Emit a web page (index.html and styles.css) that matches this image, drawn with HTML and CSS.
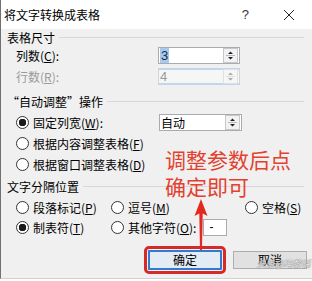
FILE: index.html
```html
<!DOCTYPE html>
<html lang="zh-CN">
<head>
    <meta charset="UTF-8">
    <title>将文字转换成表格</title>
    <link rel="stylesheet" href="styles.css">
</head>
<body>
    <div class="dialog">
        <div class="titlebar">
            <span class="title">将文字转换成表格</span>
            <span class="help">?</span>
            <svg class="close" width="12" height="12" viewBox="0 0 12 12">
                <path d="M1 1L11 11M11 1L1 11" stroke="#222" stroke-width="1"/>
            </svg>
        </div>

        <div class="group-title"><span>表格尺寸</span></div>
        <div class="field-row">
            <label>列数(<u>C</u>):</label>
            <div class="spin">
                <span class="value"><span class="sel">3</span></span>
                <span class="spin-btn">
                    <svg width="13" height="13" viewBox="0 0 13 13"><path d="M4 5L6.5 2.5L9 5Z M4 8L6.5 10.5L9 8Z" fill="#222"/><path d="M2 6.5H11" stroke="#bbb"/></svg>
                </span>
            </div>
        </div>
        <div class="field-row disabled">
            <label>行数(<u>R</u>):</label>
            <div class="spin">
                <span class="value">4</span>
                <span class="spin-btn">
                    <svg width="13" height="13" viewBox="0 0 13 13"><path d="M4 5L6.5 2.5L9 5Z M4 8L6.5 10.5L9 8Z" fill="#aaa"/><path d="M2 6.5H11" stroke="#ddd"/></svg>
                </span>
            </div>
        </div>

        <div class="group-title second"><span>“自动调整”操作</span></div>
        <div class="radio-row">
            <span class="radio checked">固定列宽(<u>W</u>):</span>
            <div class="spin">
                <span class="value">自动</span>
                <span class="spin-btn">
                    <svg width="13" height="13" viewBox="0 0 13 13"><path d="M4 5L6.5 2.5L9 5Z M4 8L6.5 10.5L9 8Z" fill="#222"/><path d="M2 6.5H11" stroke="#bbb"/></svg>
                </span>
            </div>
        </div>
        <div class="radio-row"><span class="radio">根据内容调整表格(<u>F</u>)</span></div>
        <div class="radio-row"><span class="radio">根据窗口调整表格(<u>D</u>)</span></div>

        <div class="group-title third"><span>文字分隔位置</span></div>
        <div class="sep-row first">
            <span class="radio">段落标记(<u>P</u>)</span>
            <span class="radio">逗号(<u>M</u>)</span>
            <span class="radio">空格(<u>S</u>)</span>
        </div>
        <div class="sep-row">
            <span class="radio checked">制表符(<u>T</u>)</span>
            <span class="radio other">其他字符(<u>O</u>):<span class="char-box">-</span></span>
        </div>

        <div class="buttons">
            <button class="btn ok">确定</button>
            <button class="btn">取消</button>
        </div>

        <div class="note">调整参数后点<br>确定即可</div>
        <svg class="arrow" width="20" height="54" viewBox="0 0 20 54">
            <path d="M10 1L3.5 18L8.3 15.5L9 52H11L11.7 15.5L16.5 18Z" fill="#e3281f"/>
        </svg>
        <span class="watermark">头条@冯黎话</span>
    </div>
</body>
</html>
```

FILE: styles.css
```css
body {
    margin: 0;
    background: #fff;
    font-family: "Noto Sans CJK SC", "Noto Sans", sans-serif;
    font-size: 12px;
    color: #000;
}
.dialog {
    position: relative;
    width: 312px;
    height: 279px;
    box-sizing: border-box;
    background: #f0f0f0;
    border-left: 1px solid #707070;
    border-bottom: 1px solid #d0d0d0;
}
.titlebar {
    height: 29px;
    background: #fff;
    display: flex;
    align-items: center;
    padding-left: 3px;
}
.title {
    font-size: 12px;
    flex: 1;
}
.help {
    font-family: "Liberation Sans", sans-serif;
    font-size: 13px;
    color: #333;
    margin-right: 34px;
}
.close {
    margin-right: 17px;
}
.group-title {
    height: 16px;
    display: flex;
    align-items: center;
    padding-left: 6px;
}
.group-title::after {
    content: "";
    flex: 1;
    border-top: 1px solid #d8d8d8;
    margin: 0 8px 0 4px;
}
.group-title.second {
    margin-top: 6px;
}
.group-title.third {
    margin-top: 3px;
}
.field-row {
    height: 21px;
    display: grid;
    grid-template-columns: 142px 82px;
    align-items: center;
    padding-left: 15px;
}
.field-row.disabled label {
    color: #9a9a9a;
}
.spin {
    height: 17px;
    box-sizing: border-box;
    border: 1px solid #a9abb2;
    background: #fff;
    display: flex;
    align-items: center;
}
.spin .value {
    flex: 1;
    padding-left: 1px;
    font-family: "Liberation Sans", "Noto Sans CJK SC", sans-serif;
    font-size: 13px;
    line-height: 15px;
}
.spin .sel {
    background: #a8c9ee;
    color: #1a2a4a;
    padding: 0 1px;
}
.spin-btn {
    width: 13px;
    height: 13px;
    margin-right: 1px;
    border: 1px solid #c8c8c8;
    background: #f2f2f2;
    display: flex;
}
.field-row.disabled .spin {
    background: #f6f6f6;
    border-color: #d4d4d4;
    border-top: 2px solid #c3d5eb;
    border-bottom: 2px solid #c3d5eb;
}
.field-row.disabled .value {
    color: #9a9a9a;
}
.field-row.disabled .spin-btn {
    border-color: #e0e0e0;
    background: #f6f6f6;
}
.radio-row {
    height: 21px;
    display: grid;
    grid-template-columns: 143px 83px;
    align-items: center;
    padding-left: 15px;
}
.radio-row:first-of-type,
.group-title.second + .radio-row {
    margin-top: 3px;
}
.radio {
    display: flex;
    align-items: center;
    white-space: nowrap;
}
.radio::before {
    content: "";
    width: 13px;
    height: 13px;
    box-sizing: border-box;
    border: 1px solid #333;
    border-radius: 50%;
    background: #fff;
    margin-right: 4px;
    flex: none;
}
.radio.checked::before {
    background: radial-gradient(circle, #1a1a1a 0 3.5px, #fff 4px);
}
.radio-row .spin {
    font-size: 12px;
}
.radio-row .spin .value {
    font-family: "Noto Sans CJK SC", sans-serif;
    font-size: 12px;
}
.sep-row {
    height: 20px;
    display: grid;
    grid-template-columns: 95px 134px auto;
    align-items: center;
    padding-left: 15px;
}
.sep-row.first {
    margin-top: 3px;
}
.char-box {
    display: inline-block;
    width: 24px;
    height: 17px;
    box-sizing: border-box;
    border: 1px solid #a9abb2;
    background: #fff;
    margin-left: 7px;
    padding-left: 5px;
    line-height: 14px;
    font-family: "Liberation Sans", sans-serif;
}
.buttons {
    display: flex;
    justify-content: flex-end;
    align-items: center;
    gap: 11px;
    margin-top: 13px;
    padding-right: 5px;
    height: 20px;
}
.btn {
    font-family: "Noto Sans CJK SC", sans-serif;
    font-size: 12px;
    width: 74px;
    height: 18px;
    padding: 0;
    border: 1px solid #adadad;
    background: #e1e1e1;
    color: #000;
    line-height: 16px;
}
.btn.ok {
    height: 20px;
    border: 2px solid #2f7bd0;
    background: #e3ebf4;
    border-radius: 1px;
    outline: 3px solid #d42a2a;
    outline-offset: 1px;
}
.note {
    position: absolute;
    left: 164px;
    top: 146px;
    font-size: 21px;
    line-height: 27px;
    color: #e3412f;
}
.arrow {
    position: absolute;
    left: 190px;
    top: 198px;
}
.watermark {
    position: absolute;
    left: 256px;
    top: 257px;
    font-size: 9px;
    font-style: italic;
    color: rgba(255, 255, 255, 0.85);
    text-shadow: 0 0 1px #777, 0 0 1px #777;
}
```
